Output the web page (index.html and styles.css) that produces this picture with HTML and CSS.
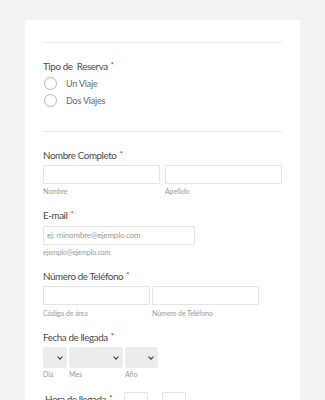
FILE: index.html
```html
<!DOCTYPE html>
<html lang="es">
<head>
<meta charset="utf-8">
<link rel="stylesheet" href="styles.css">
</head>
<body>
<div class="card">
  <div class="rule first"></div>

  <div class="field tipo">
    <div class="label">Tipo de&nbsp; Reserva <span class="req">*</span></div>
    <div class="radios">
      <div class="radio"><span class="circle"></span><span class="rtext">Un Viaje</span></div>
      <div class="radio"><span class="circle"></span><span class="rtext">Dos Viajes</span></div>
    </div>
  </div>

  <div class="rule second"></div>

  <div class="field nombre">
    <div class="label">Nombre Completo <span class="req">*</span></div>
    <div class="row">
      <div class="col w117"><div class="input"></div><div class="sub">Nombre</div></div>
      <div class="col w117"><div class="input"></div><div class="sub">Apellido</div></div>
    </div>
  </div>

  <div class="field email">
    <div class="label">E-mail <span class="req">*</span></div>
    <div class="col w152"><div class="input ph">ej: minombre@ejemplo.com</div><div class="sub">ejemplo@ejemplo.com</div></div>
  </div>

  <div class="field tel">
    <div class="label">Número de Teléfono <span class="req">*</span></div>
    <div class="row tight">
      <div class="col w107"><div class="input"></div><div class="sub">Código de área</div></div>
      <div class="col w107"><div class="input"></div><div class="sub">Número de Teléfono</div></div>
    </div>
  </div>

  <div class="field fecha">
    <div class="label">Fecha de llegada <span class="req">*</span></div>
    <div class="row tight">
      <div class="col w24"><div class="select"><span class="chev"></span></div><div class="sub">Día</div></div>
      <div class="col w54"><div class="select"><span class="chev"></span></div><div class="sub">Mes</div></div>
      <div class="col w33"><div class="select"><span class="chev"></span></div><div class="sub">Año</div></div>
    </div>
  </div>

  <div class="field hora">
    <div class="label hlabel">Hora de llegada <span class="req">*</span></div>
    <div class="box b1"></div>
    <div class="box b2"></div>
  </div>
</div>
</body>
</html>
```

FILE: styles.css
```css
html, body {
  margin: 0;
  padding: 0;
  background: #f3f3f3;
  height: 400px;
  overflow: hidden;
}
body {
  font-family: Lato, "Noto Sans", "Liberation Sans", sans-serif;
  color: #555;
}
.card {
  margin: 20px 0 0 25px;
  width: 239px;
  padding: 22px 18px 40px;
  background: #fff;
  min-height: 400px;
}
.rule {
  height: 1px;
  background: #ececec;
}
.label {
  font-size: 9.8px;
  letter-spacing: -0.4px;
  line-height: 14px;
  height: 14px;
  color: #4a4a4a;
  white-space: nowrap;
}
.req {
  color: #e3262b;
  font-size: 8px;
  position: relative;
  top: -2px;
  margin-left: 1px;
}
.tipo { margin-top: 16px; }
.radios { margin-top: 2px; }
.radio {
  display: flex;
  align-items: center;
  height: 17px;
}
.circle {
  width: 11px;
  height: 11px;
  border: 1px solid #b5b5b5;
  border-radius: 50%;
  margin-left: 1px;
  flex: none;
}
.rtext {
  margin-left: 9px;
  font-size: 9px;
  letter-spacing: -0.2px;
  color: #666;
}
.rule.second { margin-top: 22px; }
.nombre { margin-top: 16px; }
.row {
  display: flex;
  gap: 5px;
}
.row.tight { gap: 2px; }
.col { display: flex; flex-direction: column; }
.w117 { width: 117px; }
.w152 { width: 152px; }
.w107 { width: 107px; }
.w24 { width: 24px; }
.w54 { width: 54px; }
.w33 { width: 33px; }
.field .row, .field > .col { margin-top: 3px; }
.email > .col { margin-top: 4px; }
.input {
  box-sizing: border-box;
  height: 19px;
  border: 1px solid #e4e4e4;
  border-radius: 1px;
  background: #fff;
}
.input.ph {
  font-size: 8px;
  letter-spacing: -0.15px;
  line-height: 17px;
  color: #9a9a9a;
  padding-left: 3px;
  white-space: nowrap;
}
.sub {
  font-size: 7px;
  letter-spacing: -0.1px;
  line-height: 10px;
  color: #9a9a9a;
  margin-top: 2px;
  white-space: nowrap;
}
.tel .sub { margin-top: 3px; }
.email { margin-top: 12px; }
.tel { margin-top: 12px; }
.fecha { margin-top: 12px; }
.select {
  position: relative;
  height: 21px;
  background: #ececec;
  border-radius: 2px;
}
.chev {
  position: absolute;
  right: 5px;
  top: 8px;
  width: 3px;
  height: 3px;
  border-right: 1.5px solid #333;
  border-bottom: 1.5px solid #333;
  transform: rotate(45deg);
}
.fecha .sub { margin-top: 1px; }
.hora {
  margin-top: 13px;
  display: flex;
  align-items: flex-start;
}
.hlabel { margin-left: 2px; width: 79px; }
.box {
  box-sizing: border-box;
  width: 24px;
  height: 20px;
  border: 1px solid #e4e4e4;
  border-radius: 1px;
}
.b2 { margin-left: 14px; }
```
